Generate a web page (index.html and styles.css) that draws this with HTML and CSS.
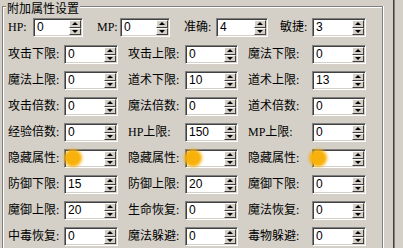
FILE: index.html
```html
<!DOCTYPE html>
<html lang="zh">
<head>
<meta charset="utf-8">
<title>附加属性设置</title>
<link rel="stylesheet" href="styles.css">
</head>
<body>
<div class="frame">
  <div class="group">
    <div class="title">附加属性设置</div>
    <div class="row1">
      <span class="lbl">HP:</span>
      <div class="field"><span class="val">0</span><div class="spin"><i class="up"></i><i class="dn"></i></div></div>
      <span class="lbl p14">MP:</span>
      <div class="field"><span class="val">0</span><div class="spin"><i class="up"></i><i class="dn"></i></div></div>
      <span class="lbl p14">准确:</span>
      <div class="field"><span class="val">4</span><div class="spin"><i class="up"></i><i class="dn"></i></div></div>
      <span class="lbl p12">敏捷:</span>
      <div class="field"><span class="val">3</span><div class="spin"><i class="up"></i><i class="dn"></i></div></div>
    </div>
    <div class="grid">
      <span class="lbl">攻击下限:</span>
      <div class="field"><span class="val">0</span><div class="spin"><i class="up"></i><i class="dn"></i></div></div>
      <span class="lbl p10">攻击上限:</span>
      <div class="field"><span class="val">0</span><div class="spin"><i class="up"></i><i class="dn"></i></div></div>
      <span class="lbl p10">魔法下限:</span>
      <div class="field"><span class="val">0</span><div class="spin"><i class="up"></i><i class="dn"></i></div></div>

      <span class="lbl">魔法上限:</span>
      <div class="field"><span class="val">0</span><div class="spin"><i class="up"></i><i class="dn"></i></div></div>
      <span class="lbl p10">道术下限:</span>
      <div class="field"><span class="val">10</span><div class="spin"><i class="up"></i><i class="dn"></i></div></div>
      <span class="lbl p10">道术上限:</span>
      <div class="field"><span class="val">13</span><div class="spin"><i class="up"></i><i class="dn"></i></div></div>

      <span class="lbl">攻击倍数:</span>
      <div class="field"><span class="val">0</span><div class="spin"><i class="up"></i><i class="dn"></i></div></div>
      <span class="lbl p10">魔法倍数:</span>
      <div class="field"><span class="val">0</span><div class="spin"><i class="up"></i><i class="dn"></i></div></div>
      <span class="lbl p10">道术倍数:</span>
      <div class="field"><span class="val">0</span><div class="spin"><i class="up"></i><i class="dn"></i></div></div>

      <span class="lbl">经验倍数:</span>
      <div class="field"><span class="val">0</span><div class="spin"><i class="up"></i><i class="dn"></i></div></div>
      <span class="lbl p10">HP上限:</span>
      <div class="field"><span class="val">150</span><div class="spin"><i class="up"></i><i class="dn"></i></div></div>
      <span class="lbl p10">MP上限:</span>
      <div class="field"><span class="val">0</span><div class="spin"><i class="up"></i><i class="dn"></i></div></div>

      <span class="lbl">隐藏属性:</span>
      <div class="field"><span class="val"></span><span class="blob b1"></span><div class="spin"><i class="up"></i><i class="dn"></i></div></div>
      <span class="lbl p10">隐藏属性:</span>
      <div class="field"><span class="val"></span><span class="blob b2"></span><div class="spin"><i class="up"></i><i class="dn"></i></div></div>
      <span class="lbl p10">隐藏属性:</span>
      <div class="field"><span class="val"></span><span class="blob b3"></span><div class="spin"><i class="up"></i><i class="dn"></i></div></div>

      <span class="lbl">防御下限:</span>
      <div class="field"><span class="val">15</span><div class="spin"><i class="up"></i><i class="dn"></i></div></div>
      <span class="lbl p10">防御上限:</span>
      <div class="field"><span class="val">20</span><div class="spin"><i class="up"></i><i class="dn"></i></div></div>
      <span class="lbl p10">魔御下限:</span>
      <div class="field"><span class="val">0</span><div class="spin"><i class="up"></i><i class="dn"></i></div></div>

      <span class="lbl">魔御上限:</span>
      <div class="field"><span class="val">20</span><div class="spin"><i class="up"></i><i class="dn"></i></div></div>
      <span class="lbl p10">生命恢复:</span>
      <div class="field"><span class="val">0</span><div class="spin"><i class="up"></i><i class="dn"></i></div></div>
      <span class="lbl p10">魔法恢复:</span>
      <div class="field"><span class="val">0</span><div class="spin"><i class="up"></i><i class="dn"></i></div></div>

      <span class="lbl">中毒恢复:</span>
      <div class="field"><span class="val">0</span><div class="spin"><i class="up"></i><i class="dn"></i></div></div>
      <span class="lbl p10">魔法躲避:</span>
      <div class="field"><span class="val">0</span><div class="spin"><i class="up"></i><i class="dn"></i></div></div>
      <span class="lbl p10">毒物躲避:</span>
      <div class="field"><span class="val">0</span><div class="spin"><i class="up"></i><i class="dn"></i></div></div>
    </div>
  </div>
  <div class="vline"></div>
</div>
</body>
</html>
```

FILE: styles.css
```css
html, body {
  margin: 0;
  padding: 0;
  background: #d4d0c8;
  overflow: hidden;
}
body {
  width: 403px;
  height: 248px;
  font-family: "Liberation Serif", "Noto Sans CJK SC", serif;
  font-size: 12px;
  color: #000;
}
.frame {
  display: flex;
  align-items: flex-start;
  height: 248px;
}
.group {
  margin: 6px 0 0 2px;
  width: 381px;
  height: 242px;
  border: 1px solid #808080;
  border-bottom: none;
  box-shadow: inset 1px 1px 0 #fff, 1px 0 0 #fff;
  padding: 0 0 0 5px;
  box-sizing: border-box;
  flex: none;
  overflow: visible;
}
.title {
  display: block;
  width: fit-content;
  margin: -6px 0 0 -2px;
  padding: 0 1px;
  background: #d4d0c8;
  line-height: 13px;
  height: 13px;
  font-family: "Noto Sans CJK SC", sans-serif;
}
.row1 {
  display: grid;
  grid-template-columns: 25px 50px 37px 50px 46px 52px 44px 54px;
  grid-auto-rows: 19px;
  margin-top: 4px;
}
.grid {
  display: grid;
  grid-template-columns: 56px 54px 67px 53px 74px 54px;
  grid-auto-rows: 19px;
  row-gap: 7px;
  margin-top: 8px;
}
.lbl {
  display: flex;
  align-items: center;
  white-space: nowrap;
  line-height: 19px;
}
.p10 { padding-left: 10px; }
.p12 { padding-left: 12px; }
.p14 { padding-left: 14px; }
.field {
  position: relative;
  display: flex;
  align-items: stretch;
  background: #fff;
  border-style: solid;
  border-width: 1px;
  border-color: #808080 #fff #fff #808080;
  box-shadow: inset 1px 1px 0 #404040, inset -1px -1px 0 #d4d0c8;
  padding: 1px;
}
.val {
  flex: 1;
  font-family: "Liberation Sans", Arial, sans-serif;
  font-size: 12px;
  line-height: 15px;
  padding-left: 2px;
  overflow: hidden;
}
.spin {
  width: 12px;
  display: flex;
  flex-direction: column;
}
.spin i {
  flex: 1;
  display: flex;
  align-items: center;
  justify-content: center;
  background: #d4d0c8;
  border-style: solid;
  border-width: 1px;
  border-color: #fff #404040 #404040 #fff;
  box-sizing: border-box;
}
.spin i::before {
  content: "";
  width: 0;
  height: 0;
  border-left: 3px solid transparent;
  border-right: 3px solid transparent;
}
.spin .up::before { border-bottom: 3px solid #000; }
.spin .dn::before { border-top: 3px solid #000; }
.blob {
  position: absolute;
  top: -1px;
  width: 18px;
  height: 18px;
  border-radius: 50%;
  background: #f8b10a;
  filter: blur(1.8px);
}
.b1 { left: -1px; }
.b2 { left: -2px; }
.b3 { left: -4px; }
.vline {
  margin-left: 10px;
  width: 1px;
  height: 248px;
  border-left: 1px solid #404040;
  background: #808080;
}
```
